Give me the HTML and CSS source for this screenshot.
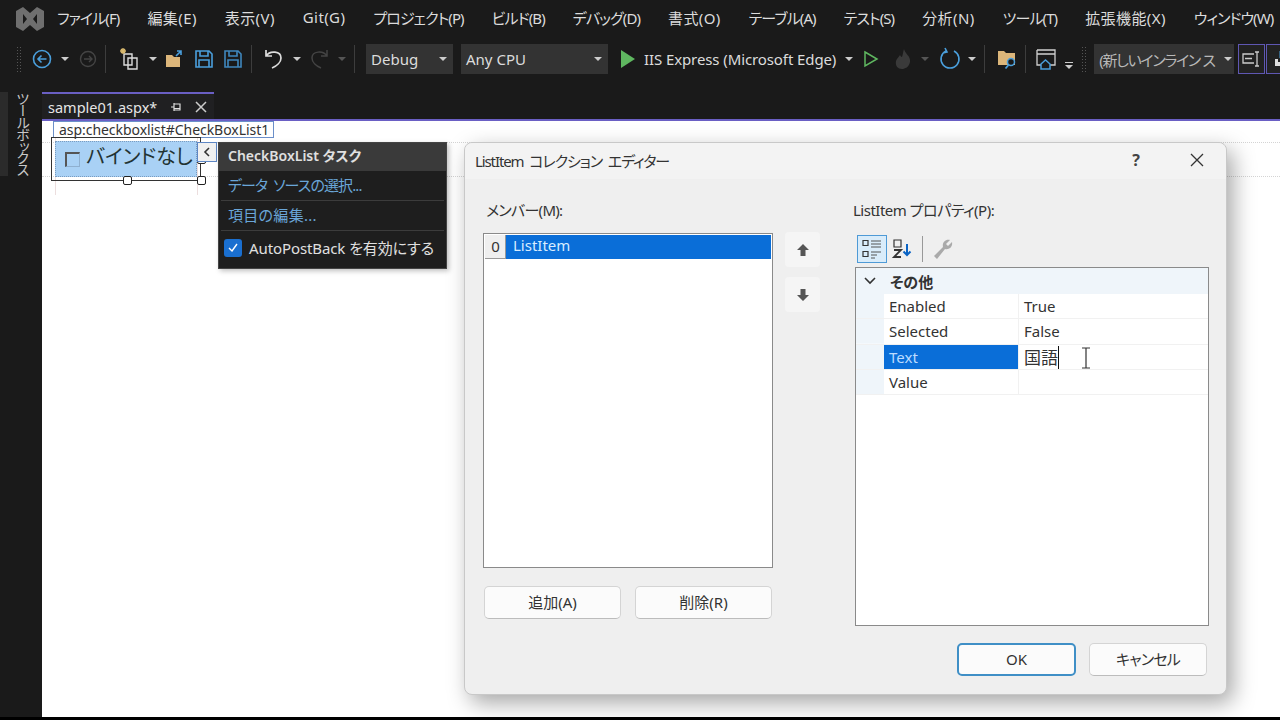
FILE: index.html
```html
<!DOCTYPE html>
<html lang="ja">
  <head>
    <title>ListItem コレクション エディター</title>
    <link rel="stylesheet" href="styles.css">
  </head>
  <body>
    <!-- Menu bar -->
    <div class="menubar">
      <svg class="logo" width="30" height="28" viewBox="0 0 30 28">
        <path d="M8 2 L15 8 L22 2 L29 6 V22 L22 26 L15 20 L8 26 L1 22 V6 Z" fill="#6f6f6f"/>
        <path d="M8 9 L12 14 L8 19 Z M22 9 V19 L18 14 Z" fill="#1a1a1a"/>
      </svg>
      <div class="menu-items">
        <span class="kana">ファイル(F)</span>
        <span class="kanji">編集(E)</span>
        <span class="kanji">表示(V)</span>
        <span class="kanji">Git(G)</span>
        <span class="kana">プロジェクト(P)</span>
        <span class="kana">ビルド(B)</span>
        <span class="kana">デバッグ(D)</span>
        <span class="kanji">書式(O)</span>
        <span class="kana">テーブル(A)</span>
        <span class="kana">テスト(S)</span>
        <span class="kanji">分析(N)</span>
        <span class="kana">ツール(T)</span>
        <span class="kanji">拡張機能(X)</span>
        <span class="kana">ウィンドウ(W)</span>
      </div>
    </div>

    <!-- Toolbar -->
    <div class="toolbar">
      <div class="grip"></div>
      <svg class="tool" width="20" height="20" viewBox="0 0 20 20" fill="none" stroke="#4a9fdc" stroke-width="1.6">
        <circle cx="10" cy="10" r="8.5"/><path d="M14.5 10 H6 M9.5 6.5 L6 10 L9.5 13.5"/>
      </svg>
      <i class="caret"></i>
      <svg class="tool dim" width="18" height="18" viewBox="0 0 18 18" fill="none" stroke="#444" stroke-width="1.4">
        <circle cx="9" cy="9" r="7.5"/><path d="M5 9 H13 M10 6 L13 9 L10 12"/>
      </svg>
      <div class="sep"></div>
      <svg class="tool" width="22" height="24" viewBox="0 0 22 24" fill="none" stroke="#ddd" stroke-width="1.4">
        <path d="M6 7 H14 V18 H6 Z M10 11 H19 V22 H10 Z" />
        <path d="M5 1 V7 M2 4 H8 M3 2 L7 6 M7 2 L3 6" stroke="#d9b96e"/>
      </svg>
      <i class="caret"></i>
      <svg class="tool near" width="20" height="20" viewBox="0 0 20 20">
        <path d="M1 6 H7 L9 8 H15 V18 H1 Z" fill="#dcb67a"/>
        <path d="M11 7 L16 2 M12 2 H16 V6" fill="none" stroke="#4a9fdc" stroke-width="1.6"/>
      </svg>
      <svg class="tool close" width="20" height="20" viewBox="0 0 20 20" fill="none" stroke="#4a9fdc" stroke-width="1.6">
        <path d="M2 2 H15 L18 5 V18 H2 Z M6 2 V7 H14 V2 M5 18 V11 H15 V18"/>
      </svg>
      <svg class="tool close" width="20" height="20" viewBox="0 0 20 20" fill="none" stroke="#3f87bd" stroke-width="1.6">
        <path d="M2 2 H15 L18 5 V18 H2 Z M6 2 V7 H14 V2 M5 18 V11 H15 V18"/>
      </svg>
      <div class="sep"></div>
      <svg class="tool" width="20" height="22" viewBox="0 0 20 22" fill="none" stroke="#ddd" stroke-width="1.7">
        <path d="M2 2 V8 H8 M2 8 C6 2 17 3 17 10 C17 14 13 18 8 20"/>
      </svg>
      <i class="caret"></i>
      <svg class="tool near" width="20" height="22" viewBox="0 0 20 22" fill="none" stroke="#444" stroke-width="1.5">
        <path d="M18 2 V8 H12 M18 8 C14 2 3 3 3 10 C3 14 7 18 12 20"/>
      </svg>
      <i class="caret off"></i>
      <div class="sep"></div>
      <div class="combo debug"><span>Debug</span><i class="caret"></i></div>
      <div class="combo cpu"><span>Any CPU</span><i class="caret"></i></div>
      <svg class="tool play" width="16" height="20" viewBox="0 0 16 20"><path d="M1 1 L15 10 L1 19 Z" fill="#5fb760"/></svg>
      <span class="run-label">IIS Express (Microsoft Edge)</span>
      <i class="caret"></i>
      <svg class="tool" width="16" height="18" viewBox="0 0 16 18"><path d="M2 2 L14 9 L2 16 Z" fill="none" stroke="#5fb760" stroke-width="1.5"/></svg>
      <svg class="tool flame" width="18" height="22" viewBox="0 0 18 22"><path d="M10 1 C11 6 17 8 16 14 C15 19 11 21 8 21 C4 21 1 18 2 13 C3 10 5 9 6 7 C7 9 8 9 8 9 C9 6 9 4 10 1 Z" fill="#3a3a3a"/></svg>
      <i class="caret off"></i>
      <svg class="tool" width="22" height="24" viewBox="0 0 22 24" fill="none" stroke="#4a9fdc" stroke-width="1.6">
        <path d="M15 4 A9 9 0 1 1 7 4 M6 1 L8 5 L4 6"/>
      </svg>
      <i class="caret tight"></i>
      <div class="sep"></div>
      <svg class="tool" width="20" height="22" viewBox="0 0 20 22">
        <path d="M1 3 H7 L9 5 H18 V17 H1 Z" fill="#dcb67a"/>
        <circle cx="14" cy="14" r="3.5" fill="#1a1a1a" stroke="#4a9fdc" stroke-width="1.5"/>
        <path d="M11.5 17 L8.5 20.5" stroke="#4a9fdc" stroke-width="1.8"/>
      </svg>
      <div class="sep"></div>
      <svg class="tool near" width="20" height="22" viewBox="0 0 20 22" fill="none" stroke="#cfcfcf" stroke-width="1.3">
        <path d="M1 2 H19 V17 H14 M1 2 V17 H5 M1 6 H19"/>
        <path d="M5 16 L9.5 12 L14 16 V21 H5 Z" stroke="#4a9fdc" stroke-width="1.5"/>
      </svg>
      <div class="overflow"><b></b><i class="caret"></i></div>
      <div class="grip"></div>
      <div class="combo inline"><span>(新しいインライン ス</span><i class="caret"></i></div>
      <div class="tool-btn">
        <svg width="20" height="18" viewBox="0 0 20 18" fill="none" stroke="#ccc" stroke-width="1.3">
          <path d="M12 4 H1 V13 H12 M3 8.5 H10 M15 2 V16 M13 2 H17 M13 16 H17"/>
        </svg>
      </div>
      <div class="tool-btn cut">
        <svg width="12" height="18" viewBox="0 0 12 18"><path d="M1 9 V16 H12 V9 H9 V12 H4 V9 Z" fill="#ddd"/><path d="M6.5 1 V8" stroke="#4a9fdc" stroke-width="2"/></svg>
      </div>
    </div>

    <!-- Document well -->
    <div class="well">
      <div class="side">
        <div class="toolbox-tab">ツールボックス</div>
      </div>
      <div class="doc">
        <div class="tabstrip">
          <div class="tab">
            <span class="tab-name">sample01.aspx*</span>
            <svg width="12" height="10" viewBox="0 0 12 10" fill="none" stroke="#ddd" stroke-width="1.2">
              <path d="M1 5 H4 M4 1 V9 M4 2 H10 V8 H4 M4 6.5 H10"/>
            </svg>
            <svg width="12" height="12" viewBox="0 0 12 12" fill="none" stroke="#ccc" stroke-width="1.5">
              <path d="M1 1 L11 11 M11 1 L1 11"/>
            </svg>
          </div>
        </div>

        <div class="designer">
          <div class="guide guide-top"></div>
          <div class="guide guide-bottom"></div>
          <div class="guide-v guide-v1"></div>
          <div class="guide-v guide-v2"></div>

          <div class="tag-label">asp:checkboxlist#CheckBoxList1</div>
          <div class="selection">
            <div class="check-row">
              <span class="fake-check"></span>
              <span class="check-text">バインドなし</span>
            </div>
            <i class="handle h-bottom"></i>
            <i class="handle h-corner"></i>
            <i class="handle h-right"></i>
          </div>
          <div class="smart-tag">
            <svg width="8" height="10" viewBox="0 0 8 10" fill="none" stroke="#333" stroke-width="1.6"><path d="M6 1 L2 5 L6 9"/></svg>
          </div>

          <!-- Smart tag panel -->
          <div class="task-panel">
            <div class="task-head">CheckBoxList タスク</div>
            <div class="task-link kana-link">データ ソースの選択...</div>
            <div class="task-link">項目の編集...</div>
            <div class="task-check">
              <span class="blue-check">
                <svg width="10" height="9" viewBox="0 0 10 9" fill="none" stroke="#fff" stroke-width="1.4"><path d="M1 5 L4 8 L9 1"/></svg>
              </span>
              AutoPostBack を有効にする
            </div>
          </div>

          <!-- Collection editor dialog -->
          <div class="dialog">
            <div class="dialog-title">
              <span class="dialog-name">ListItem コレクション エディター</span>
              <div class="title-btns">
                <span class="help">?</span>
                <svg width="14" height="14" viewBox="0 0 14 14" fill="none" stroke="#333" stroke-width="1.3"><path d="M1 1 L13 13 M13 1 L1 13"/></svg>
              </div>
            </div>
            <div class="dialog-body">
              <div class="members">
                <label>メンバー(M):</label>
                <div class="member-list">
                  <div class="member-row">
                    <span class="member-index">0</span>
                    <span class="member-name">ListItem</span>
                  </div>
                </div>
                <div class="member-btns">
                  <button>追加(A)</button>
                  <button>削除(R)</button>
                </div>
              </div>
              <div class="arrows">
                <div class="arrow-btn">
                  <svg width="14" height="14" viewBox="0 0 14 14"><path d="M7 1 L13 7 H9.5 V13 H4.5 V7 H1 Z" fill="#555"/></svg>
                </div>
                <div class="arrow-btn">
                  <svg width="14" height="14" viewBox="0 0 14 14"><path d="M7 13 L13 7 H9.5 V1 H4.5 V7 H1 Z" fill="#555"/></svg>
                </div>
              </div>
              <div class="props">
                <label>ListItem プロパティ(P):</label>
                <div class="prop-tools">
                  <div class="prop-tool on">
                    <svg width="22" height="22" viewBox="0 0 22 22" fill="none" stroke="#333" stroke-width="1.2">
                      <path d="M2 2.5 H7 V7.5 H2 Z M2 13.5 H7 V18.5 H2 Z"/>
                      <path d="M10 3 H20 M10 6 H20 M10 9 H20 M10 14 H20 M10 17 H16 M10 20 H14" stroke="#555"/>
                    </svg>
                  </div>
                  <div class="prop-tool">
                    <svg width="24" height="22" viewBox="0 0 24 22" fill="none">
                      <path d="M3 2 H10 V9 H3 Z" stroke="#333" stroke-width="1.2"/>
                      <path d="M3 12 H10 L3 19 H10" stroke="#333" stroke-width="1.8"/>
                      <path d="M16 6 V17 M12.5 13.5 L16 17 L19.500 13.5" stroke="#0a63c4" stroke-width="2"/>
                    </svg>
                  </div>
                  <div class="tool-line"></div>
                  <svg class="wrench" width="22" height="22" viewBox="0 0 22 22"><path d="M2 18 L11 9 C10 5 13 1 18 2 L14 6 L16 8 L20 4 C21 9 17 12 13 11 L5 21 Z" fill="#aaa"/></svg>
                </div>
                <div class="prop-grid">
                  <div class="cat-row">
                    <svg width="12" height="8" viewBox="0 0 12 8" fill="none" stroke="#333" stroke-width="1.6"><path d="M1 1 L6 6 L11 1"/></svg>
                    <span>その他</span>
                  </div>
                  <div class="prop-row"><span class="prop-name">Enabled</span><span class="prop-val">True</span></div>
                  <div class="prop-row"><span class="prop-name">Selected</span><span class="prop-val">False</span></div>
                  <div class="prop-row"><span class="prop-name sel">Text</span><span class="prop-val"><span class="caret-text">国語</span></span></div>
                  <div class="prop-row"><span class="prop-name">Value</span><span class="prop-val"></span></div>
                  <svg class="ibeam" width="10" height="22" viewBox="0 0 10 22" fill="none" stroke="#333" stroke-width="1.2"><path d="M1 1 H9 M1 21 H9 M5 1 V21"/></svg>
                </div>
              </div>
            </div>
            <div class="dialog-foot">
              <button class="ok">OK</button>
              <button class="cancel">キャンセル</button>
            </div>
          </div>
        </div>
      </div>
    </div>
  </body>
</html>
```

FILE: styles.css
```css
/* Page shell */
body {
  margin: 0;
  width: 1280px;
  height: 720px;
  overflow: hidden;
  display: flex;
  flex-direction: column;
  background-color: #1a1a1a;
  color: #dcdcdc;
  font-family: "Noto Sans", "Noto Sans CJK JP", sans-serif;
  font-feature-settings: "palt";
}

/* Menu bar */
.menubar {
  height: 38px;
  box-sizing: border-box;
  display: flex;
  align-items: center;
  padding: 0 0 1px 15px;
}

.logo {
  flex: none;
}

.menu-items {
  display: flex;
  gap: 28px;
  margin-left: 12px;
  padding-bottom: 2px;
  font-size: 15px;
  white-space: nowrap;
}

.kana {
  letter-spacing: -0.9px;
}

.kanji {
  letter-spacing: 0.4px;
}

/* Toolbar */
.toolbar {
  height: 42px;
  display: flex;
  align-items: center;
  padding-left: 16px;
  white-space: nowrap;
}

.grip {
  width: 6px;
  height: 26px;
  flex: none;
  background-image: radial-gradient(#555 1px, transparent 1px);
  background-size: 3px 3px;
}

.tool {
  flex: none;
  margin-left: 10px;
}

.tool.near {
  margin-left: 8px;
}

.tool.close {
  margin-left: 9px;
}

.caret {
  display: inline-block;
  flex: none;
  width: 0;
  height: 0;
  margin-left: 9px;
  border-left: 4px solid transparent;
  border-right: 4px solid transparent;
  border-top: 4px solid #ccc;
}

.caret.off {
  border-top-color: #555;
}

.caret.tight {
  margin-left: 7px;
}

.sep {
  width: 1px;
  height: 28px;
  flex: none;
  margin: 0 2px 0 8px;
  background-color: #3d3d3d;
}

.combo {
  height: 30px;
  flex: none;
  display: flex;
  align-items: center;
  justify-content: space-between;
  box-sizing: border-box;
  padding: 0 6px 0 5px;
  margin-left: 8px;
  background-color: #333333;
  font-size: 15px;
}

.combo.debug {
  width: 87px;
  margin-left: 9px;
}

.combo.cpu {
  width: 147px;
}

.combo.inline {
  width: 140px;
  margin-left: 7px;
  letter-spacing: -1.3px;
  color: #b8b8b8;
}

.play {
  margin-left: 12px;
}

.run-label {
  margin-left: 8px;
  font-size: 15px;
  letter-spacing: -0.1px;
}

.flame {
  margin-left: 15px;
}

.overflow {
  display: flex;
  flex-direction: column;
  align-items: center;
  gap: 2px;
  margin: 12px 8px 0 9px;
}

.overflow b {
  width: 8px;
  height: 1px;
  background-color: #ccc;
}

.overflow .caret {
  margin-left: 0;
}

.tool-btn {
  width: 27px;
  height: 30px;
  flex: none;
  display: flex;
  align-items: center;
  justify-content: center;
  box-sizing: border-box;
  margin-left: 4px;
  border: 1px solid #5f57b3;
  background-color: #222;
}

.tool-btn.cut {
  margin-left: 1px;
}

/* Document well */
.well {
  flex: 1;
  display: flex;
  min-height: 0;
  border-bottom: 3px solid #000;
  background-color: #1a1a1a;
}

.side {
  width: 42px;
  flex: none;
  padding-top: 12px;
}

.toolbox-tab {
  height: 84px;
  box-sizing: border-box;
  border-left: 8px solid #2b2b2b;
  padding-left: 5px;
  writing-mode: vertical-rl;
  white-space: nowrap;
  font-size: 14px;
  font-feature-settings: "vpal";
  letter-spacing: -1px;
  line-height: 18px;
  color: #c8c8c8;
}

.doc {
  flex: 1;
  display: flex;
  flex-direction: column;
  min-width: 0;
  padding-top: 12px;
}

.tabstrip {
  height: 27px;
  flex: none;
  display: flex;
  border-bottom: 2px solid #6a5fc4;
}

.tab {
  width: 172px;
  box-sizing: border-box;
  display: flex;
  align-items: center;
  gap: 13px;
  padding: 0 6px;
  border-top: 2px solid #6a5fc4;
  background-color: #202022;
  font-size: 14.5px;
}

.tab-name {
  color: #e6e6e6;
}

/* Designer surface */
.designer {
  flex: 1;
  position: relative;
  background-color: #fff;
  overflow: hidden;
  color: #222;
}

.guide {
  position: absolute;
  left: 0;
  right: 0;
  height: 0;
  border-top: 1px dotted #d4d4d4;
}

.guide-top {
  top: 21px;
}

.guide-bottom {
  top: 55px;
}

.guide-v {
  position: absolute;
  top: 16px;
  height: 58px;
  width: 0;
  border-left: 1px solid #ecdede;
}

.guide-v1 {
  left: 13px;
}

.guide-v2 {
  left: 155px;
}

.tag-label {
  position: absolute;
  left: 11px;
  top: 0;
  height: 17px;
  box-sizing: border-box;
  width: 221px;
  padding-left: 5px;
  border: 1px solid #6b8fc9;
  background-color: #fff;
  font-size: 14px;
  line-height: 15px;
  letter-spacing: -0.05px;
  color: #333;
  white-space: nowrap;
}

.selection {
  position: absolute;
  left: 9px;
  top: 16px;
  width: 150px;
  height: 44px;
  box-sizing: border-box;
  padding: 3px;
  border: 1px solid #333;
}

.check-row {
  height: 36px;
  box-sizing: border-box;
  display: flex;
  align-items: center;
  gap: 6px;
  padding: 0 0 8px 10px;
  background-color: #a9d1f5;
  outline: 1px dotted #7a9cc0;
  outline-offset: -1px;
}

.fake-check {
  width: 15px;
  height: 15px;
  margin-top: 8px;
  box-sizing: border-box;
  border-top: 2px solid #555;
  border-left: 2px solid #555;
  border-right: 1px solid #8fb0d0;
  border-bottom: 1px solid #8fb0d0;
}

.check-text {
  font-size: 20px;
  color: #233;
}

.handle {
  position: absolute;
  width: 7px;
  height: 7px;
  border: 1px solid #222;
  border-radius: 2px;
  background-color: #fff;
}

.h-bottom {
  left: 71px;
  bottom: -5px;
}

.h-corner {
  right: -6px;
  bottom: -5px;
}

.h-right {
  right: -6px;
  top: 17px;
}

.smart-tag {
  position: absolute;
  left: 155px;
  top: 21px;
  width: 20px;
  height: 20px;
  display: flex;
  align-items: center;
  justify-content: center;
  box-sizing: border-box;
  border: 1px solid #5d86c4;
  background-color: #f0f0f0;
}

/* Smart tag panel */
.task-panel {
  position: absolute;
  left: 176px;
  top: 21px;
  width: 229px;
  height: 127px;
  box-sizing: border-box;
  border: 1px solid #444;
  background-color: #1e1e1e;
  color: #e0e0e0;
  box-shadow: 2px 2px 5px rgba(0, 0, 0, 0.25);
}

.task-head {
  height: 28px;
  box-sizing: border-box;
  padding-left: 9px;
  background-color: #3a3a3a;
  font-size: 14px;
  font-weight: 600;
  line-height: 26px;
}

.task-link {
  height: 30px;
  box-sizing: border-box;
  margin: 0 2px;
  padding-left: 7px;
  border-bottom: 1px solid #3c3c3c;
  font-size: 15px;
  line-height: 29px;
  letter-spacing: 0.3px;
  color: #6aa6d8;
}

.task-link.kana-link {
  letter-spacing: -0.9px;
  word-spacing: 3px;
}

.task-check {
  display: flex;
  align-items: center;
  gap: 7px;
  height: 33px;
  padding-left: 5px;
  font-size: 15px;
  letter-spacing: -0.1px;
}

.blue-check {
  width: 18px;
  height: 18px;
  display: flex;
  align-items: center;
  justify-content: center;
  border-radius: 3px;
  background-color: #1a6fd0;
}

/* Collection editor dialog */
.dialog {
  position: absolute;
  left: 422px;
  top: 21px;
  width: 763px;
  height: 553px;
  box-sizing: border-box;
  display: flex;
  flex-direction: column;
  border: 1px solid #c8c8c8;
  border-radius: 8px;
  background-color: #efefef;
  box-shadow: 6px 8px 22px rgba(0, 0, 0, 0.35);
  font-size: 15px;
  color: #333;
}

.dialog-title {
  height: 36px;
  box-sizing: border-box;
  flex: none;
  display: flex;
  align-items: center;
  justify-content: space-between;
  padding: 0 22px 2px 10px;
  border-radius: 8px 8px 0 0;
  background-color: #f3f3f3;
}

.dialog-name {
  letter-spacing: -1.1px;
  word-spacing: 3px;
}

.title-btns {
  display: flex;
  align-items: center;
  gap: 50px;
}

.help {
  font-size: 16px;
  font-weight: 700;
  color: #444;
}

.dialog-body {
  height: 444px;
  flex: none;
  display: flex;
  padding: 20px 18px 0 18px;
}

.members {
  width: 290px;
  flex: none;
}

.members label,
.props label {
  display: block;
  height: 22px;
  line-height: 22px;
}

.members label {
  padding-left: 3px;
  letter-spacing: -0.7px;
}

.props label {
  margin-left: -2px;
  letter-spacing: -0.5px;
}

.member-list {
  height: 335px;
  box-sizing: border-box;
  margin-top: 12px;
  padding: 1px;
  border: 1px solid #8a8a8a;
  background-color: #fff;
}

.member-row {
  height: 24px;
  display: flex;
  background-color: #0a6ed8;
}

.member-index {
  width: 21px;
  text-align: center;
  line-height: 23px;
  background-color: #efefef;
  box-shadow: inset -1px -1px 0 #999;
}

.member-name {
  padding-left: 7px;
  line-height: 21px;
  color: #d8ecff;
}

.member-btns {
  display: flex;
  gap: 14px;
  margin-top: 18px;
  padding-left: 1px;
}

button {
  height: 33px;
  box-sizing: border-box;
  padding-bottom: 3px;
  border: 1px solid #d4d4d4;
  border-bottom-color: #bcbcbc;
  border-radius: 5px;
  background-color: #fbfbfb;
  font-family: inherit;
  font-feature-settings: inherit;
  font-size: 15px;
  color: #333;
}

.member-btns button {
  width: 137px;
}

.arrows {
  width: 35px;
  flex: none;
  display: flex;
  flex-direction: column;
  gap: 10px;
  margin: 33px 35px 0 12px;
}

.arrow-btn {
  height: 35px;
  display: flex;
  align-items: center;
  justify-content: center;
  border-radius: 4px;
  background-color: #f5f5f5;
}

.props {
  width: 354px;
  flex: none;
}

.prop-tools {
  height: 29px;
  display: flex;
  align-items: center;
  gap: 1px;
  margin: 13px 0 4px;
  padding-left: 2px;
}

.prop-tool {
  width: 30px;
  height: 28px;
  display: flex;
  align-items: center;
  justify-content: center;
  box-sizing: border-box;
}

.prop-tool.on {
  border: 1px solid #4e9ad6;
  background-color: #d9ecfa;
}

.tool-line {
  width: 1px;
  height: 26px;
  margin: 0 8px 0 3px;
  background-color: #999;
}

.wrench {
  flex: none;
}

.prop-grid {
  position: relative;
  height: 359px;
  box-sizing: border-box;
  border: 1px solid #8a8a8a;
  background-color: #fff;
}

.cat-row {
  height: 26px;
  display: flex;
  align-items: center;
  gap: 14px;
  padding-left: 8px;
  background-color: #eff5fa;
  font-weight: 700;
}

.prop-row {
  height: 25.3px;
  box-sizing: border-box;
  display: flex;
  padding-left: 28px;
  border-bottom: 1px solid #f1f1f1;
  background: linear-gradient(#eff5fa, #eff5fa) left / 28px 100% no-repeat;
}

.prop-name {
  width: 135px;
  flex: none;
  box-sizing: border-box;
  padding-left: 5px;
  border-right: 1px solid #f1f1f1;
  line-height: 25px;
}

.prop-name.sel {
  background-color: #0a6ed8;
  color: #bcdcff;
}

.prop-val {
  padding-left: 5px;
  line-height: 25px;
}

.caret-text {
  border-right: 1px solid #111;
  font-size: 17px;
}

.ibeam {
  position: absolute;
  left: 225px;
  top: 79px;
}

.dialog-foot {
  display: flex;
  justify-content: flex-end;
  gap: 13px;
  padding-right: 19px;
}

.dialog-foot button {
  width: 119px;
}

.dialog-foot .ok {
  border: 2px solid #3f8fc6;
}

.dialog-foot .cancel {
  width: 118px;
  letter-spacing: -0.8px;
}
```
